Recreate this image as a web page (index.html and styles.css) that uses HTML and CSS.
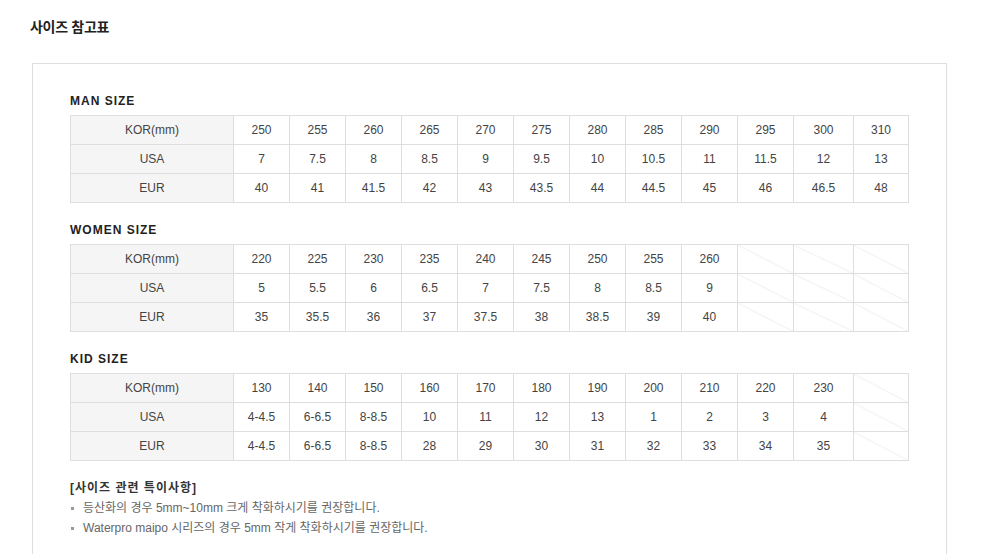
FILE: index.html
```html
<!DOCTYPE html>
<html lang="ko">
<head>
<meta charset="utf-8">
<title>사이즈 참고표</title>
<link rel="stylesheet" href="styles.css">
</head>
<body>
<div class="page">
  <h2 class="page-title">사이즈 참고표</h2>
  <div class="box">
    <section class="size-section">
      <h3 class="size-label">MAN SIZE</h3>
      <table class="size-table">
        <colgroup>
          <col class="c-head"><col class="c"><col class="c"><col class="c"><col class="c"><col class="c"><col class="c"><col class="c"><col class="c"><col class="c"><col class="c"><col class="c-wide"><col class="c-last">
        </colgroup>
        <tr><th>KOR(mm)</th><td>250</td><td>255</td><td>260</td><td>265</td><td>270</td><td>275</td><td>280</td><td>285</td><td>290</td><td>295</td><td>300</td><td>310</td></tr>
        <tr><th>USA</th><td>7</td><td>7.5</td><td>8</td><td>8.5</td><td>9</td><td>9.5</td><td>10</td><td>10.5</td><td>11</td><td>11.5</td><td>12</td><td>13</td></tr>
        <tr><th>EUR</th><td>40</td><td>41</td><td>41.5</td><td>42</td><td>43</td><td>43.5</td><td>44</td><td>44.5</td><td>45</td><td>46</td><td>46.5</td><td>48</td></tr>
      </table>
    </section>
    <section class="size-section">
      <h3 class="size-label">WOMEN SIZE</h3>
      <table class="size-table">
        <colgroup>
          <col class="c-head"><col class="c"><col class="c"><col class="c"><col class="c"><col class="c"><col class="c"><col class="c"><col class="c"><col class="c"><col class="c"><col class="c-wide"><col class="c-last">
        </colgroup>
        <tr><th>KOR(mm)</th><td>220</td><td>225</td><td>230</td><td>235</td><td>240</td><td>245</td><td>250</td><td>255</td><td>260</td><td class="empty"></td><td class="empty"></td><td class="empty"></td></tr>
        <tr><th>USA</th><td>5</td><td>5.5</td><td>6</td><td>6.5</td><td>7</td><td>7.5</td><td>8</td><td>8.5</td><td>9</td><td class="empty"></td><td class="empty"></td><td class="empty"></td></tr>
        <tr><th>EUR</th><td>35</td><td>35.5</td><td>36</td><td>37</td><td>37.5</td><td>38</td><td>38.5</td><td>39</td><td>40</td><td class="empty"></td><td class="empty"></td><td class="empty"></td></tr>
      </table>
    </section>
    <section class="size-section">
      <h3 class="size-label">KID SIZE</h3>
      <table class="size-table">
        <colgroup>
          <col class="c-head"><col class="c"><col class="c"><col class="c"><col class="c"><col class="c"><col class="c"><col class="c"><col class="c"><col class="c"><col class="c"><col class="c-wide"><col class="c-last">
        </colgroup>
        <tr><th>KOR(mm)</th><td>130</td><td>140</td><td>150</td><td>160</td><td>170</td><td>180</td><td>190</td><td>200</td><td>210</td><td>220</td><td>230</td><td class="empty"></td></tr>
        <tr><th>USA</th><td>4-4.5</td><td>6-6.5</td><td>8-8.5</td><td>10</td><td>11</td><td>12</td><td>13</td><td>1</td><td>2</td><td>3</td><td>4</td><td class="empty"></td></tr>
        <tr><th>EUR</th><td>4-4.5</td><td>6-6.5</td><td>8-8.5</td><td>28</td><td>29</td><td>30</td><td>31</td><td>32</td><td>33</td><td>34</td><td>35</td><td class="empty"></td></tr>
      </table>
    </section>
    <div class="notes">
      <h4 class="notes-title">[사이즈 관련 특이사항]</h4>
      <ul class="notes-list">
        <li>등산화의 경우 5mm~10mm 크게 착화하시기를 권장합니다.</li>
        <li>Waterpro maipo 시리즈의 경우 5mm 작게 착화하시기를 권장합니다.</li>
      </ul>
    </div>
  </div>
</div>
</body>
</html>
```

FILE: styles.css
```css
* { box-sizing: border-box; }
html, body {
  margin: 0;
  padding: 0;
  background: #fff;
}
body {
  font-family: "Liberation Sans", "Noto Sans CJK KR", sans-serif;
  color: #333;
}
.page {
  width: 1001px;
  padding: 17px 0 0 0;
}
.page-title {
  margin: 0 0 26px 30px;
  font-size: 14px;
  line-height: 20px;
  font-weight: bold;
  color: #222;
  letter-spacing: -0.3px;
}
.box {
  margin-left: 32px;
  width: 915px;
  border: 1px solid #dedede;
  padding: 29px 38px 40px 37px;
}
.size-section {
  margin-bottom: 19px;
}
.size-label {
  margin: 0 0 6px 0;
  font-size: 12px;
  line-height: 16px;
  font-weight: bold;
  color: #222;
  letter-spacing: 1px;
}
.size-table {
  border-collapse: collapse;
  table-layout: fixed;
  width: 838px;
}
.c-head { width: 163px; }
.c { width: 56px; }
.c-wide { width: 60px; }
.c-last { width: 55px; }
.size-table th,
.size-table td {
  border: 1px solid #dedede;
  height: 29px;
  padding: 0;
  text-align: center;
  vertical-align: middle;
  font-size: 12px;
  font-weight: normal;
  color: #444;
}
.size-table th {
  background: #f5f5f5;
}
.size-table td.empty {
  background: linear-gradient(to top right, transparent calc(50% - 0.6px), #e6e6e6 50%, transparent calc(50% + 0.6px));
}
.notes {
  margin-top: -2px;
}
.notes-title {
  margin: 0;
  font-size: 12px;
  line-height: 20px;
  font-weight: bold;
  color: #333;
  letter-spacing: 1px;
}
.notes-list {
  list-style: none;
  margin: 0;
  padding: 0;
}
.notes-list li {
  position: relative;
  padding-left: 13px;
  font-size: 12px;
  line-height: 20px;
  color: #666;
}
.notes-list li::before {
  content: "";
  position: absolute;
  left: 1px;
  top: 9px;
  width: 3px;
  height: 3px;
  background: #999;
}
```
